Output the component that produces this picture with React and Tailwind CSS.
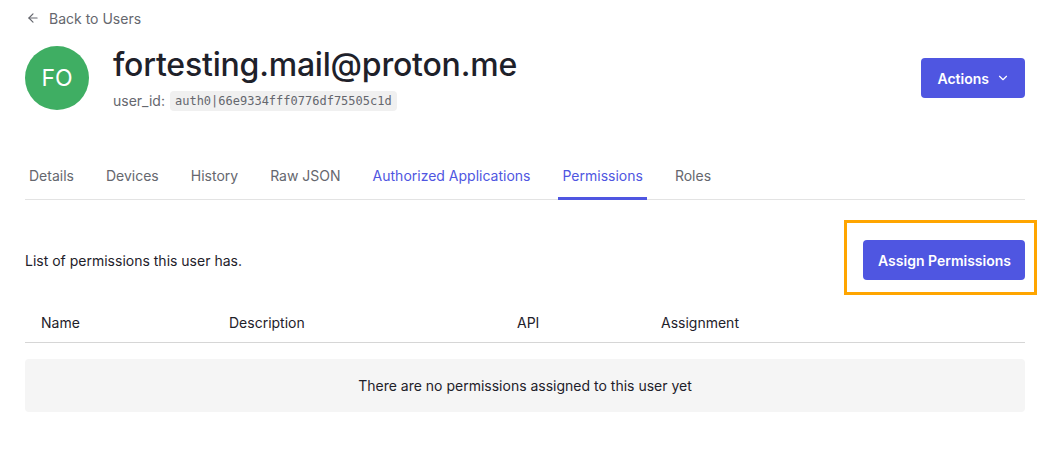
import React from "react";

export default function App() {
  const tabs = [
    { label: "Details" },
    { label: "Devices" },
    { label: "History" },
    { label: "Raw JSON" },
    { label: "Authorized Applications", visited: true },
    { label: "Permissions", active: true },
    { label: "Roles" },
  ];
  return (
    <div className="w-[1056px] h-[472px] bg-white pl-[25px] pr-[31px] pt-[8px] text-[#1e212a]" style={{ fontFamily: "Inter, 'Noto Sans', sans-serif" }}>
      <div className="flex items-center h-[20px] text-[14px] text-[#65676e]">
        <svg width="14" height="14" viewBox="0 0 24 24" fill="none" stroke="currentColor" strokeWidth="2" strokeLinecap="round" strokeLinejoin="round" className="ml-[1px]">
          <path d="M19 12H5" />
          <path d="M12 19l-7-7 7-7" />
        </svg>
        <span className="ml-[9px]">Back to Users</span>
      </div>

      <div className="flex items-start mt-[17px]">
        <div className="w-[64px] h-[64px] rounded-full bg-[#3fae63] flex items-center justify-center text-white text-[23px] mt-[1px]">FO</div>
        <div className="ml-[24px] flex flex-col">
          <div className="text-[32px] leading-[40px] font-medium text-[#1e212a] tracking-[-0.2px]">fortesting.mail@proton.me</div>
          <div className="flex items-center mt-[5px] text-[14px] text-[#65676e]">
            <span>user_id:</span>
            <span className="ml-[5px] bg-[#f0f0f0] rounded-[4px] px-[5px] h-[20px] flex items-center text-[12px] text-[#65676e]" style={{ fontFamily: "'DejaVu Sans Mono', monospace" }}>auth0|66e9334fff0776df75505c1d</span>
          </div>
        </div>
        <div className="ml-auto mt-[13px]">
          <button className="h-[40px] pl-[16px] pr-[15px] bg-[#4f56e1] text-white rounded-[4px] text-[14px] font-semibold flex items-center gap-[7px]">
            Actions
            <svg width="14" height="14" viewBox="0 0 24 24" fill="none" stroke="currentColor" strokeWidth="2" strokeLinecap="round" strokeLinejoin="round">
              <path d="M6 9l6 6 6-6" />
            </svg>
          </button>
        </div>
      </div>

      <div className="flex mt-[41px] border-b border-[#e3e3e3] gap-[24px]">
        {tabs.map((t) => (
          <div
            key={t.label}
            className={
              "px-[4px] h-[48px] pt-[1px] flex items-center text-[14px] -mb-px border-b-[3px] " +
              (t.active
                ? "border-[#4f56e1] text-[#4f56e1]"
                : t.visited
                ? "border-transparent text-[#4f56e1]"
                : "border-transparent text-[#65676e]")
            }
          >
            {t.label}
          </div>
        ))}
      </div>

      <div className="flex items-center mt-[40px] h-[40px]">
        <div className="text-[14px] text-[#1e212a]">List of permissions this user has.</div>
        <div className="ml-auto relative">
          <button className="h-[40px] pl-[15px] pr-[14px] bg-[#4f56e1] text-white rounded-[4px] text-[14px] font-semibold">Assign Permissions</button>
          <div className="absolute left-[-19px] right-[-12px] top-[-20px] bottom-[-15px] border-[3px] border-[#ffa500] pointer-events-none"></div>
        </div>
      </div>

      <div className="mt-[23px] flex h-[40px] items-center border-b border-[#d6d6d6] text-[14px] text-[#1e212a]">
        <div className="w-[188px] pl-[16px]">Name</div>
        <div className="w-[288px] pl-[16px]">Description</div>
        <div className="w-[144px] pl-[16px]">API</div>
        <div className="flex-1 pl-[16px]">Assignment</div>
      </div>

      <div className="mt-[16px] h-[53px] bg-[#f5f5f5] rounded-[4px] flex items-center justify-center text-[14px] text-[#1e212a]">
        There are no permissions assigned to this user yet
      </div>
    </div>
  );
}
